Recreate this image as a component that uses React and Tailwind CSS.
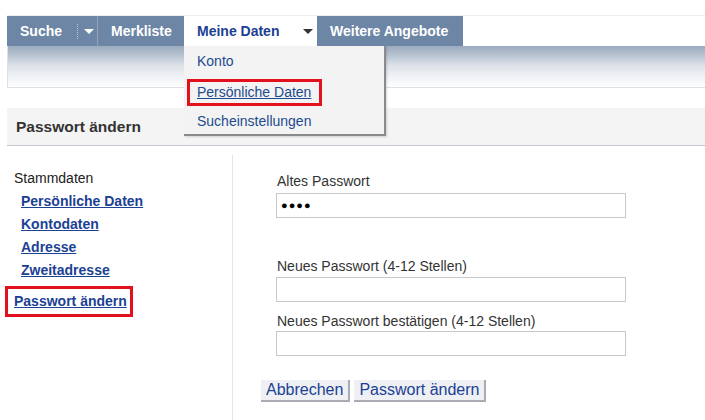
import React from 'react';

const tri = (color) => (
  <span className={`inline-block w-0 h-0 border-l-[5px] border-r-[5px] border-t-[5px] border-l-transparent border-r-transparent ${color}`} />
);

export default function App() {
  const links = ['Persönliche Daten', 'Kontodaten', 'Adresse', 'Zweitadresse'];

  return (
    <div className="w-[705px] h-[420px] bg-white relative overflow-hidden font-['Liberation_Sans',Arial,sans-serif] pt-[15px]">
      <div className="ml-[7px] border-t border-[#eceef1]">
        {/* NAV */}
        <div className="h-[30px] flex text-[14px] font-bold relative z-10">
          <div className="w-[91px] bg-[#6d86a6] text-white flex items-center pl-[13px] border-r border-[#8ea2bc]">
            <span>Suche</span>
            <span className="ml-[15px] h-[15px] border-l border-dotted border-[#b9c6d6]" />
            <span className="ml-[6px] flex items-center">{tri('border-t-white')}</span>
          </div>
          <div className="w-[86px] bg-[#6d86a6] text-white flex items-center pl-[13px]">Merkliste</div>
          <div className="w-[133px] bg-white text-[#1b4193] flex items-center pl-[13px] relative">
            <span>Meine Daten</span>
            <span className="ml-[24px] flex items-center">{tri('border-t-[#333]')}</span>
            {/* DROPDOWN */}
            <div className="absolute left-0 top-[30px] w-[202px] h-[90px] bg-[#f3f3f3] border-r-2 border-b-2 border-[#8a8a8a] font-normal text-[#1d4a8e] shadow-[1px_1px_2px_rgba(0,0,0,0.15)]">
              <div className="h-[30px] leading-[30px] pl-[13px]">Konto</div>
              <div className="h-[30px] pt-[3px] pl-[3px]">
                <span className="inline-block h-[27px] leading-[21px] border-[3px] border-[#e3101e] pl-[7px] pr-[8px] underline">Persönliche Daten</span>
              </div>
              <div className="h-[30px] leading-[30px] pl-[13px]">Sucheinstellungen</div>
            </div>
          </div>
          <div className="w-[146px] bg-[#6d86a6] text-white flex items-center pl-[13px]">Weitere Angebote</div>
          <div className="flex-1 bg-white" />
        </div>

        {/* BAND */}
        <div className="h-[42px] bg-gradient-to-b from-[#9aaabf] via-[#dfe4ea] to-white border-b border-l border-[#dde1e6]" />
        <div className="h-[20px]" />

        {/* HEADER */}
        <div className="h-[38px] bg-[#f4f4f4] border-b border-[#c3c8d1] flex items-center pl-[9px] text-[15.5px] font-bold text-[#333]">
          Passwort ändern
        </div>

        {/* CONTENT */}
        <div className="flex">
          <div className="w-[226px] pt-[21px] text-[14px] mt-[9px] border-r border-[#e4e4e4] h-[300px]">
            <div className="-mt-[9px] pl-[7px] leading-[23px] text-[#222]">Stammdaten</div>
            {links.map((l) => (
              <div key={l} className="pl-[14px] leading-[23px] font-bold underline text-[#1b4193]">{l}</div>
            ))}
            <div className="mt-[4px] -ml-[2px]">
              <span className="inline-block border-[3px] border-[#e3101e] h-[31px] leading-[24px] pl-[6px] pr-[3px] font-bold underline text-[#1b4193]">Passwort ändern</span>
            </div>
          </div>

          <div className="flex-1 pt-[26px] text-[14px] text-[#333]">
            <div className="pl-[43px]">
              <div className="leading-[18px] pl-[1px]">Altes Passwort</div>
              <div className="mt-[3px] w-[350px] h-[25px] border border-[#c8c8c8] bg-white flex items-center pl-[4px] text-[11px] tracking-[1px] text-black">●●●●</div>
              <div className="mt-[39px] leading-[18px] pl-[1px]">Neues Passwort (4-12 Stellen)</div>
              <div className="mt-[2px] w-[350px] h-[25px] border border-[#c8c8c8] bg-white" />
              <div className="mt-[10px] leading-[18px] pl-[1px]">Neues Passwort bestätigen (4-12 Stellen)</div>
              <div className="mt-[1px] w-[350px] h-[25px] border border-[#c8c8c8] bg-white" />
            </div>
            <div className="mt-[24px] pl-[28px] flex gap-[4px] text-[16px] text-[#1b4193]">
              <button className="h-[22px] px-[5px] bg-[#eef0f3] border-r-2 border-b-2 border-[#a9adb3] leading-[20px]">Abbrechen</button>
              <button className="h-[22px] px-[5px] bg-[#eef0f3] border-r-2 border-b-2 border-[#a9adb3] leading-[20px]">Passwort ändern</button>
            </div>
          </div>
        </div>
      </div>
    </div>
  );
}
